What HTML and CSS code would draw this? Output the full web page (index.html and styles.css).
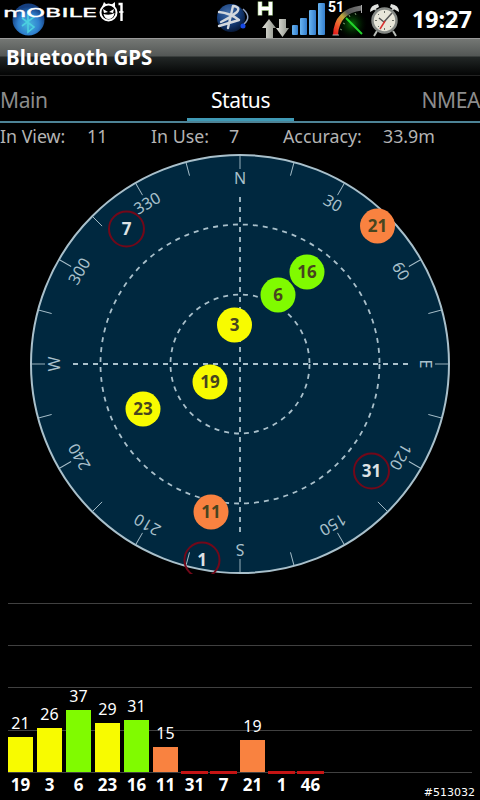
FILE: index.html
```html
<!DOCTYPE html>
<html lang="en">
<head>
<meta charset="utf-8">
<title>Bluetooth GPS</title>
<link rel="stylesheet" href="styles.css">
</head>
<body>
<header class="statusbar">
  <svg class="brand" width="130" height="38" viewBox="0 0 130 38">
    <defs>
      <radialGradient id="orb" cx=".5" cy=".65" r=".55"><stop offset="0" stop-color="#48b8dc"/><stop offset=".6" stop-color="#2f80cf"/><stop offset="1" stop-color="#153f80"/></radialGradient>
    </defs>
    <circle cx="28.500" cy="19.500" r="16" fill="url(#orb)"/>
    <path d="M22 18l12 9-6 5V12l6 5-12 9" fill="none" stroke="#4bd0e0" stroke-width="1.600"/>
    <text class="brand-name" x="3" y="17" textLength="94" lengthAdjust="spacingAndGlyphs">mOBILE</text>
    <circle cx="108.500" cy="12.500" r="8" fill="#000" stroke="#fff" stroke-width="2"/>
    <path d="M102 7l2-5 3 3zM111 5l4-3v5z" fill="#fff"/>
    <path d="M103 9l5 3-4 1zM114 9l-5 3 4 1z" fill="#fff"/>
    <path d="M103.500 14q6 2 11-1-1 6-6 6-4 0-5-5z" fill="#fff"/>
    <path d="M118.500 4h3v17" fill="none" stroke="#fff" stroke-width="2.400"/>
    <path d="M119 12h4.500" stroke="#fff" stroke-width="1.500"/>
  </svg>
  <svg class="indicators" width="190" height="38" viewBox="214 0 190 38">
    <defs>
      <radialGradient id="ball" cx=".4" cy=".3" r=".7"><stop offset="0" stop-color="#426da8"/><stop offset=".6" stop-color="#153c79"/><stop offset="1" stop-color="#071a3c"/></radialGradient>
      <linearGradient id="arrow" x1="0" x2="1"><stop offset="0" stop-color="#e4e4dc"/><stop offset="1" stop-color="#8e928a"/></linearGradient>
      <linearGradient id="bar" x1="0" x2="1"><stop offset="0" stop-color="#69b5f2"/><stop offset="1" stop-color="#347dcc"/></linearGradient>
      <linearGradient id="arc" x1="0" y1="1" x2="1" y2="0"><stop offset="0" stop-color="#e51919"/><stop offset=".28" stop-color="#ef6b32"/><stop offset=".48" stop-color="#b9a73c"/><stop offset=".65" stop-color="#555"/><stop offset="1" stop-color="#777"/></linearGradient>
      <radialGradient id="glow"><stop offset="0" stop-color="#087508"/><stop offset="1" stop-color="#001000" stop-opacity="0"/></radialGradient>
    </defs>
    <circle cx="231" cy="18" r="14" fill="url(#ball)"/>
    <path d="M219 12q11 1 20 8l-20 6M228 28l5-22q8 1 4 6-7 6-16 10" fill="none" stroke="#d2d7dd" stroke-width="2.400" stroke-linecap="round" stroke-linejoin="round"/>
    <path d="M243 9q9 8 1 15" fill="none" stroke="#91a3c2" stroke-width="1.500"/>
    <circle cx="243" cy="26" r="2.500" fill="#1749e6"/>
    <path d="M260 1.500v14M270.500 1.500v14M260 8.500h10" fill="none" stroke="#b7dc9a" stroke-width="4.500"/>
    <path d="M260 2v13M270.500 2v13M260 8.500h10" fill="none" stroke="#fff" stroke-width="3"/>
    <path d="M269 19l7 9h-3v10h-7v-10h-4z" fill="url(#arrow)"/>
    <path d="M279 19h7v9h3l-6.500 9-6.500-9h3z" fill="url(#arrow)"/>
    <g fill="url(#bar)"><rect x="292" y="25" width="6" height="10" rx="1"/><rect x="300" y="18" width="7" height="17" rx="1"/><rect x="309" y="10" width="7" height="25" rx="1"/><rect x="318" y="3" width="7" height="32" rx="1"/></g>
    <circle cx="352" cy="24" r="15" fill="url(#glow)"/>
    <path d="M335.500 35q1-24 26-27" fill="none" stroke="url(#arc)" stroke-width="5"/>
    <path d="M332.500 35h6.500M361.500 5v8" stroke="#aaa" stroke-width="1"/>
    <path d="M340 29l2 1M343 23l2 1M349 15l1 2M355 13l1 2" stroke="#77986c"/>
    <path d="M346 18l16 16" stroke="#22d62b" stroke-width="2"/>
    <text class="battery" x="328" y="12">51</text>
    <g stroke="#b9bdb8" stroke-width="2"><path d="M377 31l-3 5M393 31l3 5M376 10l-3-3M392 10l3-3"/></g>
    <path d="M370 12q0-7 8-8l1 3zM399 12q0-7-8-8l-1 3z" fill="#e1e3df"/>
    <circle cx="384.500" cy="20.500" r="12" fill="#e8e6d9" stroke="#858985" stroke-width="2.500"/>
    <g stroke="#6d7168"><path d="M384.500 11v2M384.500 28v2M375 20.500h2M392 20.500h2M378 14l1 1M391 14l-1 1M378 27l1-1M391 27l-1-1"/></g>
    <path d="M379 18l5 4 8-9" fill="none" stroke="#555" stroke-width="1.500"/>
    <path d="M385 21l-5 8" stroke="#d83131" stroke-width="1.500"/>
  </svg>
  <time class="clock">19:27</time>
</header>
<h1 class="title">Bluetooth GPS</h1>
<nav class="tabs">
  <span class="tab">Main</span>
  <span class="tab active">Status</span>
  <span class="tab last">NMEA</span>
</nav>
<section class="stats">
  <span>In View:</span><span>11</span><span>In Use:</span><span>7</span><span>Accuracy:</span><span>33.9m</span>
</section>
<svg class="sky" id="sky" width="480" height="424" viewBox="0 150 480 424"></svg>
<section class="chart">
  <div class="plot" id="plot"></div>
  <div class="ids" id="ids"></div>
  <footer class="serial">#513032</footer>
</section>
<script src="app.js"></script>
</body>
</html>
```
FILE: styles.css
```css
* { box-sizing: border-box; }
body {
  margin: 0;
  width: 480px;
  height: 800px;
  overflow: hidden;
  background: #000;
  color: #fff;
  font-family: "Noto Sans", "Open Sans", sans-serif;
}
.statusbar {
  display: flex;
  height: 38px;
}
.indicators { margin-left: 84px; }
.brand-name {
  font: 12.500px "DejaVu Sans", sans-serif;
  fill: #fff;
  stroke: #fff;
  stroke-width: 0.4px;
}
.battery { font: bold 14px Roboto, sans-serif; fill: #fff; }
.clock {
  flex: 1;
  padding-right: 8px;
  text-align: right;
  font-size: 23.500px;
  font-weight: 700;
  line-height: 39px;
  white-space: nowrap;
}
.title {
  margin: 0;
  height: 38px;
  padding-left: 6px;
  font-size: 20.500px;
  line-height: 36px;
  font-weight: 700;
  border-top: 1px solid #9a9a9a;
  border-bottom: 1px solid #222;
  background: linear-gradient(#747774 0, #535755 17px, #222726 18px, #050606 35px);
}
.tabs {
  display: grid;
  grid-template-columns: 187px 107px 186px;
  height: 47px;
  border-bottom: 2px solid #4d8396;
  font-size: 21px;
  line-height: 48px;
  letter-spacing: -0.4px;
  color: #8c8c8c;
}
.tab { height: 45px; }
.active {
  color: #fff;
  text-align: center;
  border-bottom: 3px solid #409ab5;
}
.last { text-align: right; }
.stats {
  display: grid;
  grid-template-columns: 87px 64px 78px 54px 100px 97px;
  height: 27px;
  font-size: 17.800px;
  line-height: 26px;
  color: #b4b4b4;
}
.sky { display: block; }
.face { fill: #00283f; stroke: #a9c0cb; stroke-width: 2; }
.ring { fill: none; stroke: #a9c0cb; stroke-width: 1.800; stroke-dasharray: 5 5; }
.tick { stroke: #a9c0cb; stroke-width: 0.900; }
.degree { fill: #a9c0cb; font-size: 16px; text-anchor: middle; }
.number { font-size: 17px; font-weight: 700; text-anchor: middle; fill: #47451f; }
.number.idle { fill: #dce2e5; }
.yellow { fill: #f8fb00; background: #f8fb00; }
.green { fill: #80fb00; background: #80fb00; }
.orange { fill: #f98240; background: #f98240; }
.outline { fill: none; stroke: #720819; stroke-width: 2; }
.chart { height: 226px; padding: 29px 8px 0; }
.plot {
  display: flex;
  align-items: flex-end;
  gap: 4px;
  height: 170px;
  background:
    linear-gradient(#404040, #404040) 0 0 / 100% 1px no-repeat,
    linear-gradient(#404040, #404040) 0 42px / 100% 1px no-repeat,
    linear-gradient(#404040, #404040) 0 84px / 100% 1px no-repeat,
    linear-gradient(#404040, #404040) 0 127px / 100% 1px no-repeat,
    linear-gradient(#404040, #404040) 0 169px / 100% 1px no-repeat;
}
.column { width: 25px; text-align: center; font-size: 16px; line-height: 18px; }
.value { display: block; margin-bottom: 5px; }
.bar { margin-bottom: 1px; }
.empty { height: 3px; margin: 0 -1px -1px; background: #c51414; }
.ids { display: flex; gap: 4px; height: 24px; font-size: 17px; font-weight: 700; line-height: 24px; }
.id { width: 25px; text-align: center; }
.serial {
  margin: -11px -3px 0 0;
  text-align: right;
  font: 11px/14px "DejaVu Sans", sans-serif;
}
```
FILE: app.js
```js
const sky = document.getElementById('sky');
const cx = 240, cy = 364;
let art = `<circle class="face" cx="${cx}" cy="${cy}" r="209"/>
  <circle class="ring" cx="${cx}" cy="${cy}" r="139.5"/>
  <circle class="ring" cx="${cx}" cy="${cy}" r="69.5"/>
  <path class="ring" d="M73 364H408M240 197V532"/>`;
const names = {0: 'N', 90: 'E', 180: 'S', 270: 'W'};
for (let a = 0; a < 360; a += 15) {
  art += `<g transform="rotate(${a} ${cx} ${cy})"><path class="tick" d="M240 155v14"/>`;
  if (names[a] || a % 30 === 0) {
    art += `<text class="degree" x="240" y="184">${names[a] || a}</text>`;
  }
  art += '</g>';
}
const satellites = [
  [7, 126.5, 229, ''], [21, 377.5, 226, 'orange'], [16, 307, 272, 'green'],
  [6, 278, 295, 'green'], [3, 234.5, 325, 'yellow'], [19, 210, 382, 'yellow'],
  [23, 143, 409, 'yellow'], [31, 371.5, 471, ''], [11, 211, 512, 'orange'],
  [1, 202, 560, '']
];
for (const [id, x, y, color] of satellites) {
  art += `<circle class="${color || 'outline'}" cx="${x}" cy="${y}" r="17.5"/>
    <text class="number ${color ? '' : 'idle'}" x="${x}" y="${y + 6}">${id}</text>`;
}
sky.innerHTML = art;

const signals = [
  [19, 21, 'yellow', 35], [3, 26, 'yellow', 44], [6, 37, 'green', 62],
  [23, 29, 'yellow', 49], [16, 31, 'green', 52], [11, 15, 'orange', 25],
  [31, 0], [7, 0], [21, 19, 'orange', 32], [1, 0], [46, 0]
];
document.getElementById('plot').innerHTML = signals.map(([, v, color, h]) =>
  `<div class="column">${v ? `<span class="value">${v}</span><div class="bar ${color}" style="height:${h}px"></div>` : '<div class="empty"></div>'}</div>`
).join('');
document.getElementById('ids').innerHTML = signals.map(([id]) => `<span class="id">${id}</span>`).join('');
```
